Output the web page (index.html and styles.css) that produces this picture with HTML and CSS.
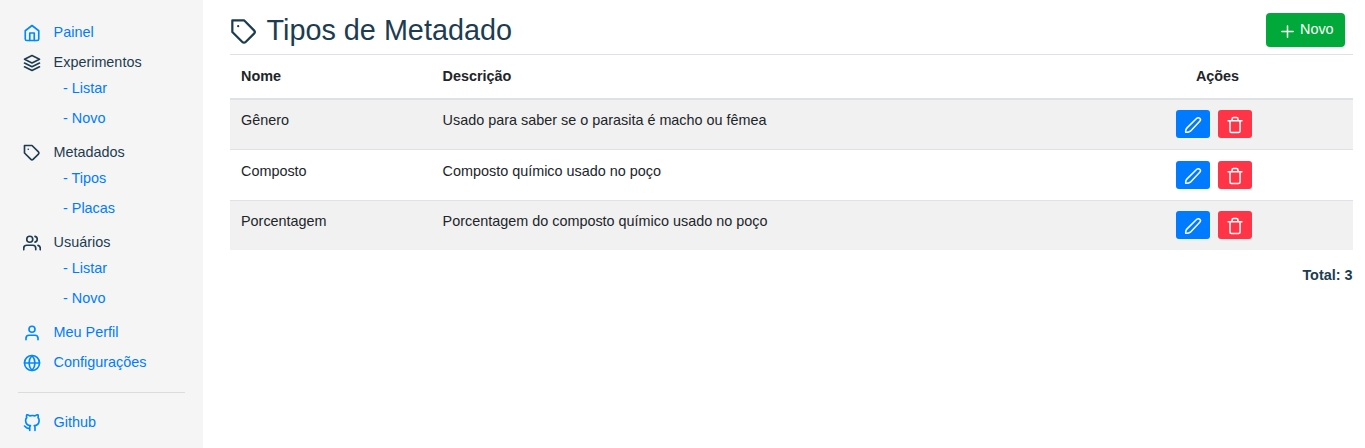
FILE: index.html
```html
<!DOCTYPE html>
<html lang="pt-BR">
<head>
<meta charset="utf-8">
<title>Tipos de Metadado</title>
<link rel="stylesheet" href="styles.css">
</head>
<body>
<svg class="sprite" aria-hidden="true">
  <symbol id="home" viewBox="0 0 24 24"><path d="M3 9l9-7 9 7v11a2 2 0 0 1-2 2H5a2 2 0 0 1-2-2z"/><path d="M9 22V12h6v10"/></symbol>
  <symbol id="layers" viewBox="0 0 24 24"><path d="M12 2L2 7l10 5 10-5-10-5z"/><path d="M2 17l10 5 10-5M2 12l10 5 10-5"/></symbol>
  <symbol id="tag" viewBox="0 0 24 24"><path d="M20.590 13.410l-7.170 7.170a2 2 0 0 1-2.830 0L2 12V2h10l8.590 8.590a2 2 0 0 1 0 2.820z"/><path d="M7 7h.01"/></symbol>
  <symbol id="users" viewBox="0 0 24 24"><path d="M17 21v-2a4 4 0 0 0-4-4H5a4 4 0 0 0-4 4v2"/><circle cx="9" cy="7" r="4"/><path d="M23 21v-2a4 4 0 0 0-3-3.870M16 3.130a4 4 0 0 1 0 7.750"/></symbol>
  <symbol id="user" viewBox="0 0 24 24"><path d="M20 21v-2a4 4 0 0 0-4-4H8a4 4 0 0 0-4 4v2"/><circle cx="12" cy="7" r="4"/></symbol>
  <symbol id="globe" viewBox="0 0 24 24"><circle cx="12" cy="12" r="10"/><path d="M2 12h20M12 2a15.300 15.300 0 0 1 4 10 15.300 15.300 0 0 1-4 10 15.300 15.300 0 0 1-4-10 15.300 15.300 0 0 1 4-10z"/></symbol>
  <symbol id="github" viewBox="0 0 24 24"><path d="M9 19c-5 1.500-5-2.500-7-3m14 6v-3.870a3.370 3.370 0 0 0-.940-2.610c3.140-.350 6.440-1.540 6.440-7A5.440 5.440 0 0 0 20 4.770 5.070 5.070 0 0 0 19.910 1S18.730.650 16 2.480a13.380 13.380 0 0 0-7 0C6.270.650 5.090 1 5.090 1A5.070 5.070 0 0 0 5 4.770a5.440 5.440 0 0 0-1.500 3.780c0 5.420 3.300 6.610 6.440 7A3.370 3.370 0 0 0 9 18.130V22"/></symbol>
  <symbol id="plus" viewBox="0 0 24 24"><path d="M12 3v18M3 12h18"/></symbol>
  <symbol id="edit" viewBox="0 0 24 24"><path d="M17 3a2.600 2.600 0 0 1 4 4L8.500 20.200Q6 22.200 2.300 21.700 1.800 18 4 15.800z"/></symbol>
  <symbol id="trash" viewBox="0 0 24 24"><path d="M2.700 6.300h18.600M18.700 6.300v13.700a2 2 0 0 1-2 2H7.300a2 2 0 0 1-2-2V6.300M8 6V4a2 2 0 0 1 2-2h4a2 2 0 0 1 2 2v2"/></symbol>
</svg>
<div class="layout">
  <nav class="sidebar">
    <a class="item link"><svg class="icon"><use href="#home"/></svg>Painel</a>
    <div class="item"><svg class="icon"><use href="#layers"/></svg>Experimentos</div>
    <div class="sub"><a class="link">- Listar</a><a class="link">- Novo</a></div>
    <div class="item"><svg class="icon"><use href="#tag"/></svg>Metadados</div>
    <div class="sub"><a class="link">- Tipos</a><a class="link">- Placas</a></div>
    <div class="item"><svg class="icon"><use href="#users"/></svg>Usuários</div>
    <div class="sub"><a class="link">- Listar</a><a class="link">- Novo</a></div>
    <a class="item link"><svg class="icon"><use href="#user"/></svg>Meu Perfil</a>
    <a class="item link"><svg class="icon"><use href="#globe"/></svg>Configurações</a>
    <hr class="divider">
    <a class="item link"><svg class="icon"><use href="#github"/></svg>Github</a>
  </nav>
  <main class="content">
    <header class="heading">
      <h1 class="title"><svg class="title-icon"><use href="#tag"/></svg>Tipos de Metadado</h1>
      <button class="btn-new"><svg class="plus"><use href="#plus"/></svg><span>Novo</span></button>
    </header>
    <table class="table">
      <colgroup><col class="c-name"><col class="c-desc"><col class="c-act"></colgroup>
      <thead><tr><th>Nome</th><th>Descrição</th><th class="center">Ações</th></tr></thead>
      <tbody>
        <tr><td>Gênero</td><td>Usado para saber se o parasita é macho ou fêmea</td><td><div class="actions"><button class="btn edit"><svg><use href="#edit"/></svg></button><button class="btn remove"><svg><use href="#trash"/></svg></button></div></td></tr>
        <tr><td>Composto</td><td>Composto químico usado no poço</td><td><div class="actions"><button class="btn edit"><svg><use href="#edit"/></svg></button><button class="btn remove"><svg><use href="#trash"/></svg></button></div></td></tr>
        <tr><td>Porcentagem</td><td>Porcentagem do composto químico usado no poço</td><td><div class="actions"><button class="btn edit"><svg><use href="#edit"/></svg></button><button class="btn remove"><svg><use href="#trash"/></svg></button></div></td></tr>
      </tbody>
    </table>
    <p class="total">Total: 3</p>
  </main>
</div>
</body>
</html>
```
FILE: styles.css
```css
* { box-sizing: border-box; }
body { margin: 0; background: #fff; color: #1d3c4f; font: 14.4px/22px "Liberation Sans", Arial, sans-serif; overflow: hidden; }
svg { fill: none; stroke: currentColor; stroke-width: 2; stroke-linecap: round; stroke-linejoin: round; flex: none; display: block; }
.sprite { display: none; }
.layout { display: flex; height: 448px; }
.sidebar { width: 203px; flex: none; background: #f5f5f5; padding: 17px 18px 0; }
.item { display: flex; align-items: center; height: 30px; padding-left: 5px; gap: 12.6px; }
.icon { width: 18px; height: 18px; margin-top: 2px; stroke-width: 2.2; overflow: visible; }
.link { color: #007bff; }
.link .icon { color: #0088ff; }
.sub { display: flex; flex-direction: column; margin: -4px 0 4px; padding-left: 45px; line-height: 30px; }
.divider { border: 0; border-top: 1px solid #dcdcdc; margin: 15px 0 14px; }
.content { flex: 1; padding: 0 12px 0 27px; }
.heading { display: flex; justify-content: space-between; height: 54px; padding: 13px 8px 0 0; }
.title { display: flex; align-items: center; gap: 8.5px; margin: 0; height: 34px; font-size: 28.8px; font-weight: 400; }
.title-icon { width: 28px; height: 28px; margin-top: 4px; stroke-width: 1.9; }
.btn-new { display: flex; align-items: center; gap: 5.5px; width: 79px; height: 34px; padding: 0 0 0 13.5px; border: 0; border-radius: 4px; background: #00a939; color: #fff; font: inherit; }
.btn-new span { margin-top: -2px; }
.plus { width: 15px; height: 15px; margin-top: 2px; stroke-width: 2.4; }
.table { width: 100%; table-layout: fixed; border-collapse: separate; border-spacing: 0; color: #212529; }
.c-name { width: 201.6px; }
.c-act { width: 271px; }
th { height: 46px; padding: 10px 11px; text-align: left; vertical-align: top; border-top: 1px solid #dee2e6; border-bottom: 2px solid #dee2e6; }
th.center { text-align: center; }
td { height: 49px; padding: 9px 11px; vertical-align: top; }
tbody tr + tr td { height: 51px; padding-top: 10px; border-top: 1px solid #dee2e6; }
tbody tr:last-child td { height: 50px; padding-top: 9px; }
tbody tr:nth-child(odd) td { background: #f1f1f1; }
.actions { display: flex; justify-content: center; gap: 8px; padding: 1px 8px 0 0; }
.btn { width: 34px; height: 28px; padding: 6px 8px 4px; border: 0; border-radius: 3px; color: #fff; }
.btn svg { width: 18px; height: 18px; stroke-width: 2; }
.edit { background: #007bff; }
.remove { background: #ff3547; }
.total { margin: 14px 0.5px 0 0; text-align: right; font-weight: 700; }
```
